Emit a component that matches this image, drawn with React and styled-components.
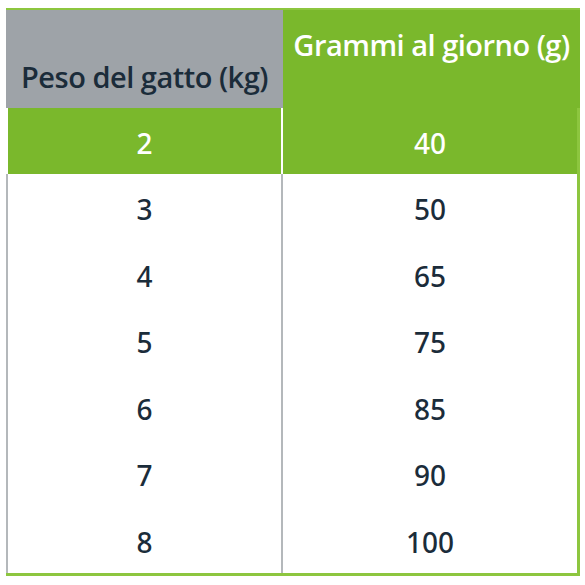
import React from "react";
import styled, { createGlobalStyle } from "styled-components";

const GlobalStyle = createGlobalStyle`
  body {
    margin: 0;
    background: #ffffff;
    font-family: "Open Sans", "Noto Sans", sans-serif;
  }
`;

const GREEN = "#7ab82c";
const GREY = "#9ea3a8";
const LINE = "#b4b8bb";
const INK = "#1b2c3a";

const Table = styled.div`
  margin: 8px 0 0 6px;
  width: 574px;
  border-top: 2px solid #8dc63f;
  border-bottom: 3px solid #8dc63f;
  display: flex;
  flex-direction: column;
`;

const Row = styled.div`
  display: grid;
  grid-template-columns: 277px 1fr;
  height: ${(props) => props.height}px;
`;

const HeadCell = styled.div`
  display: flex;
  justify-content: center;
  align-items: ${(props) => (props.bottom ? "flex-end" : "flex-start")};
  padding: ${(props) => (props.bottom ? "0 0 12px" : "15px 0 0")};
  background: ${(props) => props.bg};
  color: ${(props) => props.color};
  font-size: 29px;
  font-weight: 600;
  letter-spacing: -0.5px;
  white-space: nowrap;
`;

const Cell = styled.div`
  display: flex;
  justify-content: center;
  align-items: center;
  padding-top: 4px;
  font-family: "Noto Sans", "Open Sans", sans-serif;
  font-size: 28px;
  font-weight: 500;
  color: ${(props) => (props.highlight ? "#ffffff" : INK)};
  background: ${(props) => (props.highlight ? GREEN : "#ffffff")};
  border-left: ${(props) => props.left || "none"};
  border-right: ${(props) => props.right || "none"};
`;

const rows = [
  ["3", "50"],
  ["4", "65"],
  ["5", "75"],
  ["6", "85"],
  ["7", "90"],
  ["8", "100"],
];

export default function App() {
  return (
    <>
      <GlobalStyle />
      <Table>
        <Row height={98}>
          <HeadCell bottom bg={GREY} color={INK}>
            Peso del gatto (kg)
          </HeadCell>
          <HeadCell bg={GREEN} color="#ffffff">
            Grammi al giorno (g)
          </HeadCell>
        </Row>
        <Row height={66}>
          <Cell highlight left="2px solid #ffffff" right="2px solid #ffffff">
            2
          </Cell>
          <Cell highlight right={`3px solid #8dc63f`}>
            40
          </Cell>
        </Row>
        {rows.map(([kg, g]) => (
          <Row height={66.5} key={kg}>
            <Cell left={`2px solid ${LINE}`} right={`2px solid ${LINE}`}>
              {kg}
            </Cell>
            <Cell right={`3px solid #8dc63f`}>{g}</Cell>
          </Row>
        ))}
      </Table>
    </>
  );
}
